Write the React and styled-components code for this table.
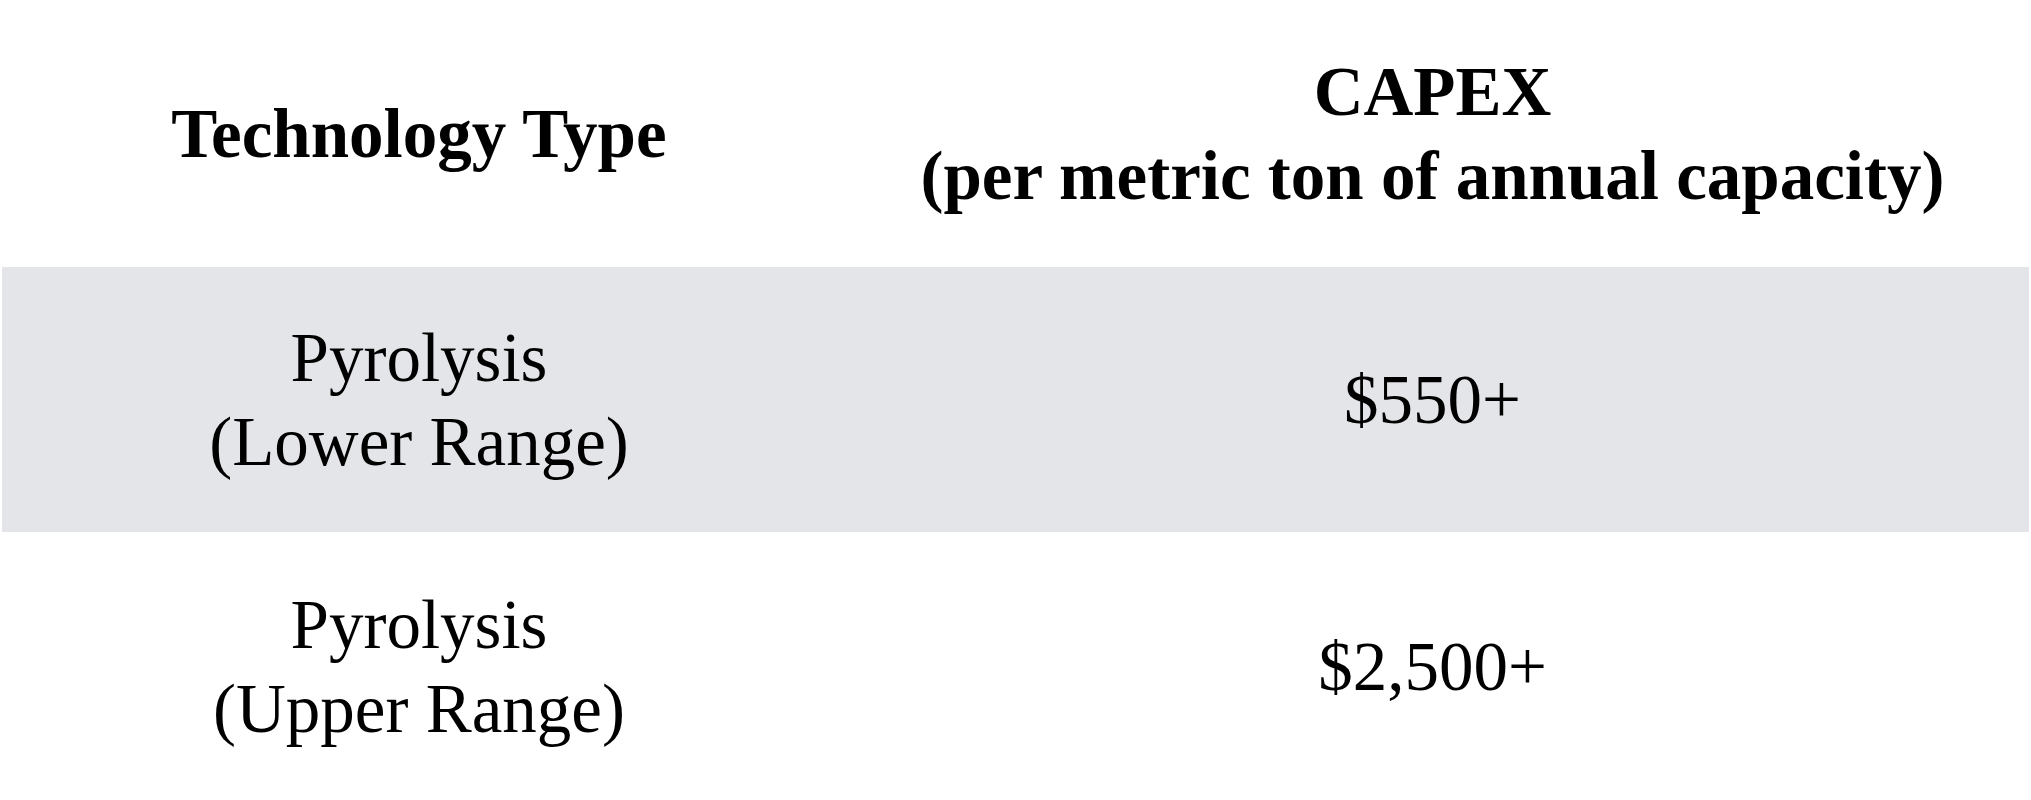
import React from "react";
import styled, { createGlobalStyle } from "styled-components";

const GlobalStyle = createGlobalStyle`
  html, body {
    margin: 0;
    padding: 0;
    background: #ffffff;
  }
  body {
    font-family: "Liberation Serif", "Times New Roman", serif;
    color: #000000;
  }
`;

const Table = styled.table`
  width: calc(100% - 4px);
  margin: 0 2px;
  border-collapse: separate;
  border-spacing: 0 2px;
  font-family: "Liberation Serif", "Times New Roman", serif;
  font-size: 69px;
  line-height: 84px;
  color: #000;
`;

const HeadCell = styled.th`
  height: 263px;
  padding: 0;
  font-weight: 700;
  text-align: center;
  vertical-align: middle;
  width: ${(p) => (p.$narrow ? "834px" : "auto")};
`;

const Row = styled.tr`
  background: ${(p) => (p.$shaded ? "#e4e5e9" : "transparent")};
`;

const Cell = styled.td`
  height: 265px;
  padding: 0;
  font-weight: 400;
  text-align: center;
  vertical-align: middle;
`;

const rows = [
  { tech: ["Pyrolysis", "(Lower Range)"], capex: "$550+" },
  { tech: ["Pyrolysis", "(Upper Range)"], capex: "$2,500+" },
];

export default function App() {
  return (
    <>
      <GlobalStyle />
      <Table>
        <thead>
          <tr>
            <HeadCell $narrow>Technology Type</HeadCell>
            <HeadCell>
              CAPEX
              <br />
              (per metric ton of annual capacity)
            </HeadCell>
          </tr>
        </thead>
        <tbody>
          {rows.map((r, i) => (
            <Row key={i} $shaded={i % 2 === 0}>
              <Cell>
                {r.tech[0]}
                <br />
                {r.tech[1]}
              </Cell>
              <Cell>{r.capex}</Cell>
            </Row>
          ))}
        </tbody>
      </Table>
    </>
  );
}
